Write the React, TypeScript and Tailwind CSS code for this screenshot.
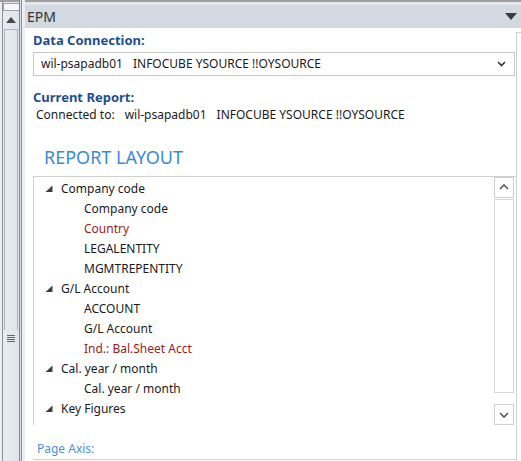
import React from "react";

const F = { fontFamily: '"Noto Sans", "Open Sans", sans-serif' };

function Caret() {
  return (
    <svg width="8" height="8" viewBox="0 0 8 8" className="shrink-0">
      <polygon points="7.5,0.5 7.5,7 0.5,7" fill="#3f3f3f" />
    </svg>
  );
}

type Row = { t: string; lvl: 0 | 1; red?: boolean };
const rows: Row[] = [
  { t: "Company code", lvl: 0 },
  { t: "Company code", lvl: 1 },
  { t: "Country", lvl: 1, red: true },
  { t: "LEGALENTITY", lvl: 1 },
  { t: "MGMTREPENTITY", lvl: 1 },
  { t: "G/L Account", lvl: 0 },
  { t: "ACCOUNT", lvl: 1 },
  { t: "G/L Account", lvl: 1 },
  { t: "Ind.: Bal.Sheet Acct", lvl: 1, red: true },
  { t: "Cal. year / month", lvl: 0 },
  { t: "Cal. year / month", lvl: 1 },
  { t: "Key Figures", lvl: 0 },
];

export default function App() {
  return (
    <div className="w-[521px] h-[461px] overflow-hidden bg-white flex text-[12px] text-[#1a1a1a]" style={F}>
      {/* Left strip */}
      <div className="w-[25px] h-full flex shrink-0">
        <div className="w-[2px] h-full bg-[#eceeef] border-t-2 border-[#a0a0a0]" />
        <div className="w-[1px] h-full bg-[#8a9099]" />
        <div className="w-[16px] h-full flex flex-col bg-gradient-to-r from-[#e9edf2] to-[#dfe4ea] border-t-2 border-[#a0a0a0]">
          <div className="h-[8px] mt-[1px] border border-[#9aa3ad] bg-[#f6f8fa] w-[18px]" />
          <div className="h-[18px] flex items-center justify-center">
            <svg width="10" height="6" viewBox="0 0 10 6">
              <polygon points="5,0 10,6 0,6" fill="#4a4a4a" />
            </svg>
          </div>
          <div className="mx-[1px] border-t border-x border-[#aab2bc] h-[301px]" />
          <div className="flex flex-col gap-[1px] items-center mt-[5px]">
            <div className="w-[8px] h-[1px] bg-[#666]" />
            <div className="w-[8px] h-[1px] bg-[#666]" />
            <div className="w-[8px] h-[1px] bg-[#666]" />
            <div className="w-[8px] h-[1px] bg-[#666]" />
          </div>
        </div>
        <div className="w-[1px] h-full bg-[#7f8893]" />
        <div className="w-[1px] h-full bg-[#d8dde3]" />
        <div className="w-[1px] h-full bg-[#8a939e]" />
        <div className="w-[3px] h-full bg-[#eaeef3]" />
      </div>

      {/* Main */}
      <div className="flex-1 flex flex-col min-w-0">
        <div className="h-[5px] border-t-2 border-[#a0a0a0] bg-[#e4e7ea]" />
        <div className="h-[23px] bg-[#d2d9e1] flex items-center justify-between pl-[2px] pr-[4px]">
          <span className="text-[14px] text-[#333]">EPM</span>
          <svg width="12" height="7" viewBox="0 0 12 7">
            <polygon points="0,0 12,0 6,7" fill="#3b3b3b" />
          </svg>
        </div>
        <div className="flex-1 flex">
          <div className="w-[491px] pl-[8px] flex flex-col">
            <div className="mt-[4px] h-[16px] leading-[16px] text-[13px] font-bold text-[#1f4e8c]">Data Connection:</div>
            <div className="mt-[4px] h-[24px] w-[482px] border border-[#c9c9c9] flex items-center justify-between pl-[7px] pr-[8px]">
              <span className="flex gap-[10px] whitespace-pre">
                <span>wil-psapadb01</span>
                <span>INFOCUBE YSOURCE !!OYSOURCE</span>
              </span>
              <svg width="9" height="6" viewBox="0 0 9 6">
                <polyline points="1,1 4.5,4.5 8,1" fill="none" stroke="#333" strokeWidth="1.6" />
              </svg>
            </div>
            <div className="mt-[13px] h-[16px] leading-[16px] text-[13px] font-bold text-[#1f4e8c]">Current Report:</div>
            <div className="mt-[2px] h-[16px] leading-[16px] pl-[3px] flex gap-[10px] whitespace-pre">
              <span>Connected to:</span>
              <span>wil-psapadb01</span>
              <span>INFOCUBE YSOURCE !!OYSOURCE</span>
            </div>
            <div className="mt-[23px] h-[22px] leading-[22px] pl-[11px] text-[18px] text-[#3a8ad6]">REPORT LAYOUT</div>
            <div className="mt-[8px] h-[249px] border-t border-l border-[#cfcfcf] flex">
              <div className="flex-1 pt-[2px] flex flex-col">
                {rows.map((r, i) => (
                  <div key={i} className="h-[20px] flex items-center">
                    {r.lvl === 0 ? (
                      <div className="pl-[11px] flex items-center gap-[8px]">
                        <Caret />
                        <span>{r.t}</span>
                      </div>
                    ) : (
                      <span className={"pl-[50px] " + (r.red ? "text-[#9c1a1a]" : "")}>{r.t}</span>
                    )}
                  </div>
                ))}
              </div>
              <div className="w-[20px] mr-[2px] flex flex-col">
                <div className="h-[21px] border border-[#d0d0d0] flex items-center justify-center">
                  <svg width="10" height="6" viewBox="0 0 10 6">
                    <polyline points="1,5 5,1 9,5" fill="none" stroke="#555" strokeWidth="1.6" />
                  </svg>
                </div>
                <div className="mt-[1px] h-[195px] border border-[#d6d6d6]" />
                <div className="mt-[11px] h-[21px] border border-[#d0d0d0] flex items-center justify-center">
                  <svg width="10" height="6" viewBox="0 0 10 6">
                    <polyline points="1,1 5,5 9,1" fill="none" stroke="#555" strokeWidth="1.6" />
                  </svg>
                </div>
              </div>
            </div>
            <div className="mt-[16px] h-[16px] leading-[16px] pl-[4px] text-[#4a90d9]">Page Axis:</div>
            <div className="mt-[2px] border-t border-[#cfcfcf]" />
          </div>
          <div className="flex-1 mt-[4px] border-t border-l border-[#cfcfcf]" />
        </div>
      </div>
    </div>
  );
}
